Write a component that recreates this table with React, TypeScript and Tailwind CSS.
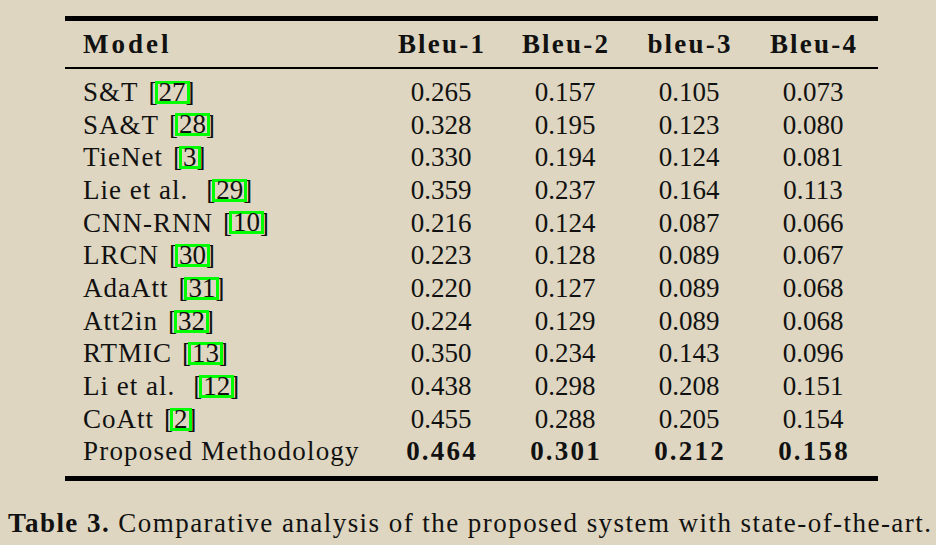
const rows: { name: string; cite: string; vals: string[] }[] = [
  { name: "S&T", cite: "27", vals: ["0.265", "0.157", "0.105", "0.073"] },
  { name: "SA&T", cite: "28", vals: ["0.328", "0.195", "0.123", "0.080"] },
  { name: "TieNet", cite: "3", vals: ["0.330", "0.194", "0.124", "0.081"] },
  { name: "Lie et al.  ", cite: "29", vals: ["0.359", "0.237", "0.164", "0.113"] },
  { name: "CNN-RNN", cite: "10", vals: ["0.216", "0.124", "0.087", "0.066"] },
  { name: "LRCN", cite: "30", vals: ["0.223", "0.128", "0.089", "0.067"] },
  { name: "AdaAtt", cite: "31", vals: ["0.220", "0.127", "0.089", "0.068"] },
  { name: "Att2in", cite: "32", vals: ["0.224", "0.129", "0.089", "0.068"] },
  { name: "RTMIC", cite: "13", vals: ["0.350", "0.234", "0.143", "0.096"] },
  { name: "Li et al.  ", cite: "12", vals: ["0.438", "0.298", "0.208", "0.151"] },
  { name: "CoAtt", cite: "2", vals: ["0.455", "0.288", "0.205", "0.154"] },
];

const headers = ["Bleu-1", "Bleu-2", "bleu-3", "Bleu-4"];
const best = ["0.464", "0.301", "0.212", "0.158"];

const Cite = ({ n }: { n: string }) => (
  <span className="inline-flex items-center ml-[10px]">
    <span>[</span>
    <span className="relative z-10 -ml-[3px] -mr-[4px] inline-flex items-center h-[23px] px-[1px] border-[3px] border-[#00ff00] leading-none">
      {n}
    </span>
    <span>]</span>
  </span>
);

export default function App() {
  return (
    <div className="w-[936px] h-[545px] overflow-hidden bg-[#ded6c0] text-[#111] [font-family:'Liberation_Serif','Times_New_Roman',serif]">
      <div className="ml-[65px] pt-[16px] w-[813px]">
        <div className="h-[4.5px] bg-black" />
        <div className="grid grid-cols-[314px_124px_124px_124px_124px] items-center h-[46.7px] text-[27px] font-bold">
          <div className="pl-[18px] tracking-[3px]">Model</div>
          {headers.map((h) => (
            <div key={h} className="text-center tracking-[2.2px] pl-[2px]">
              {h}
            </div>
          ))}
        </div>
        <div className="h-[1.4px] bg-black" />
        <div className="pt-[7.3px] pb-[8.2px]">
          {rows.map((r) => (
            <div
              key={r.name}
              className="grid grid-cols-[314px_124px_124px_124px_124px] items-center h-[32.7px] text-[27px] leading-[32.7px]"
            >
              <div className="pl-[18px] flex items-center">
                <span className="tracking-[1px] whitespace-pre">{r.name.trimEnd()}</span>
                {r.name.endsWith("  ") && <span className="w-[8px]" />}
                <Cite n={r.cite} />
              </div>
              {r.vals.map((v, i) => (
                <div key={i} className="text-center">
                  {v}
                </div>
              ))}
            </div>
          ))}
          <div className="grid grid-cols-[314px_124px_124px_124px_124px] items-center h-[32.7px] text-[27px] leading-[32.7px]">
            <div className="pl-[18px] tracking-[1.2px] whitespace-nowrap">Proposed Methodology</div>
            {best.map((v) => (
              <div key={v} className="text-center font-bold tracking-[2.2px] pl-[2px]">
                {v}
              </div>
            ))}
          </div>
        </div>
        <div className="h-[4.5px] bg-black" />
      </div>
      <p className="mt-[27px] ml-[8px] text-[27px] leading-[30px] tracking-[1.45px] whitespace-nowrap">
        <span className="font-bold">Table 3.</span> Comparative analysis of the proposed system with state-of-the-art.
      </p>
    </div>
  );
}
